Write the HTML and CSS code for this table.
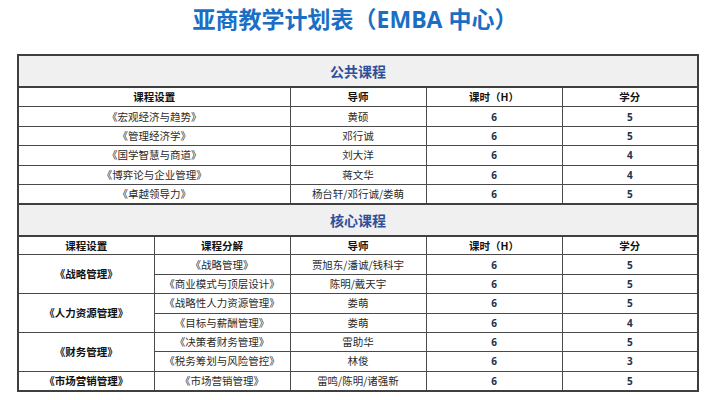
FILE: index.html
```html
<!DOCTYPE html>
<html lang="zh">
<head>
<meta charset="utf-8">
<link rel="stylesheet" href="styles.css">
</head>
<body>
<h1 class="title">亚商教学计划表（EMBA 中心）</h1>
<table class="plan">
  <colgroup>
    <col class="c"><col class="c"><col class="c"><col class="c"><col class="c">
  </colgroup>
  <tr class="sec"><td colspan="5">公共课程</td></tr>
  <tr class="head pub"><th colspan="2">课程设置</th><th>导师</th><th>课时（H）</th><th>学分</th></tr>
  <tr class="pub"><td colspan="2">《宏观经济与趋势》</td><td>黄硕</td><td class="num">6</td><td class="num">5</td></tr>
  <tr class="pub"><td colspan="2">《管理经济学》</td><td>邓行诚</td><td class="num">6</td><td class="num">5</td></tr>
  <tr class="pub"><td colspan="2">《国学智慧与商道》</td><td>刘大洋</td><td class="num">6</td><td class="num">4</td></tr>
  <tr class="pub"><td colspan="2">《博弈论与企业管理》</td><td>蒋文华</td><td class="num">6</td><td class="num">4</td></tr>
  <tr class="pub"><td colspan="2">《卓越领导力》</td><td>杨台轩/邓行诚/娄萌</td><td class="num">6</td><td class="num">5</td></tr>
  <tr class="sec sec2"><td colspan="5">核心课程</td></tr>
  <tr class="head core-head"><th>课程设置</th><th>课程分解</th><th>导师</th><th>课时（H）</th><th>学分</th></tr>
  <tr class="core"><td rowspan="2" class="grp">《战略管理》</td><td>《战略管理》</td><td>贾旭东/潘诚/钱科宇</td><td class="num">6</td><td class="num">5</td></tr>
  <tr class="core"><td>《商业模式与顶层设计》</td><td>陈明/戴天宇</td><td class="num">6</td><td class="num">5</td></tr>
  <tr class="core"><td rowspan="2" class="grp">《人力资源管理》</td><td>《战略性人力资源管理》</td><td>娄萌</td><td class="num">6</td><td class="num">5</td></tr>
  <tr class="core"><td>《目标与薪酬管理》</td><td>娄萌</td><td class="num">6</td><td class="num">4</td></tr>
  <tr class="core"><td rowspan="2" class="grp">《财务管理》</td><td>《决策者财务管理》</td><td>雷助华</td><td class="num">6</td><td class="num">5</td></tr>
  <tr class="core"><td>《税务筹划与风险管控》</td><td>林俊</td><td class="num">6</td><td class="num">3</td></tr>
  <tr class="core"><td class="grp">《市场营销管理》</td><td>《市场营销管理》</td><td>雷鸣/陈明/诸强新</td><td class="num">6</td><td class="num">5</td></tr>
</table>
</body>
</html>
```
FILE: styles.css
```css
html, body {
  margin: 0;
  padding: 0;
  background: #ffffff;
}
body {
  font-family: "Noto Sans CJK SC", sans-serif;
}
.title {
  margin: 0;
  width: 710px;
  height: 54px;
  padding-top: 4px;
  box-sizing: border-box;
  text-align: center;
  font-family: "Open Sans", "Noto Sans CJK SC", sans-serif;
  font-size: 23px;
  line-height: 30px;
  font-weight: 700;
  color: #1a6fc4;
}
.plan {
  margin-left: 17px;
  width: 680px;
  table-layout: fixed;
  border-collapse: collapse;
  border: 2px solid #3f3f3f;
}
.plan col.c {
  width: 136px;
}
.plan td, .plan th {
  border: 1px solid #4a4a4a;
  padding: 0;
  text-align: center;
  vertical-align: middle;
  font-size: 10.5px;
  line-height: 14px;
  overflow: hidden;
  white-space: nowrap;
}
.plan td {
  color: #2a2a2a;
  font-weight: 400;
}
.plan th {
  color: #111111;
  font-weight: 700;
}
.sec td {
  height: 30px;
  background: #f0f0f0;
  color: #2f4f9a;
  font-size: 14px;
  font-weight: 700;
  border-bottom: 2px solid #3f3f3f;
}
.sec2 td {
  height: 30px;
  border-top: 2px solid #3f3f3f;
}
.pub th, .pub td {
  height: 18.4px;
}
.core-head th {
  height: 17px;
}
.core td {
  height: 18.4px;
}
.plan td.grp {
  font-weight: 700;
  color: #111111;
}
.plan td.num {
  font-family: "Open Sans", sans-serif;
  font-weight: 700;
  color: #26304a;
  font-size: 10px;
}
```
